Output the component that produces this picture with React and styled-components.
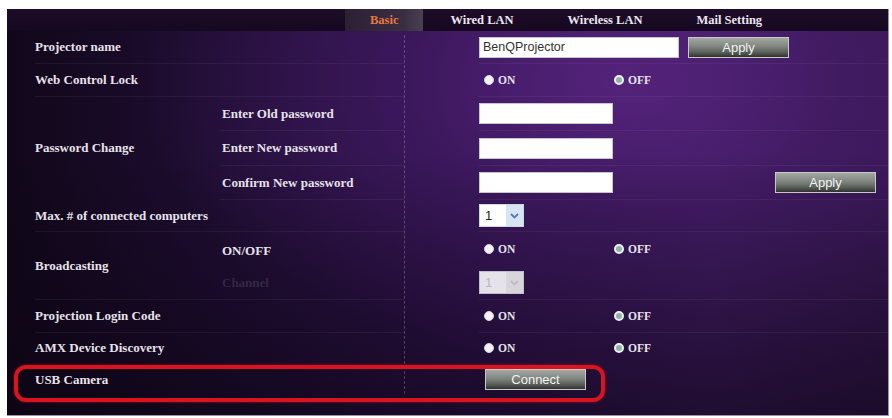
import React from 'react';
import styled, { createGlobalStyle } from 'styled-components';

const GlobalStyle = createGlobalStyle`
  html, body {
    margin: 0;
    padding: 0;
    background: #ffffff;
  }
  body {
    font-family: "Liberation Serif", "Times New Roman", serif;
  }
`;

const Page = styled.div`
  width: 892px;
  height: 418px;
  padding: 9px 3px 3px 7px;
  box-sizing: border-box;
`;

const Panel = styled.div`
  position: relative;
  height: 406px;
  display: flex;
  flex-direction: column;
  overflow: hidden;
  background:
    radial-gradient(ellipse 55% 70% at 70% 18%, rgba(88, 36, 128, 0.85) 0%, rgba(72, 28, 108, 0.5) 45%, rgba(40, 14, 60, 0) 100%),
    linear-gradient(90deg, #11071a 0%, #200e34 25%, #341554 55%, #411d64 80%, #371852 100%);
  border-right: 1px solid #9b92a0;
  border-bottom: 1px solid #9b92a0;

  &::after {
    content: '';
    position: absolute;
    inset: 0;
    pointer-events: none;
    background: linear-gradient(180deg, rgba(0, 0, 0, 0) 35%, rgba(10, 3, 16, 0.6) 100%);
  }
`;

const TabBar = styled.div`
  position: relative;
  z-index: 1;
  height: 22px;
  display: flex;
  align-items: stretch;
  padding-left: 338px;
  background: linear-gradient(180deg, #1e0c28 0%, #150820 100%);
`;

const Tab = styled.div`
  display: flex;
  align-items: center;
  padding: 0 ${(p) => (p.$active ? 25 : 27)}px;
  font-size: 12.5px;
  font-weight: bold;
  color: ${(p) => (p.$active ? '#e5793c' : '#ece6f0')};
  background: ${(p) =>
    p.$active ? 'linear-gradient(90deg, #2e2034 0%, #3b2e42 75%, #4a4050 100%)' : 'transparent'};
`;

const Grid = styled.div`
  position: relative;
  z-index: 1;
  display: grid;
  grid-template-columns: 28px 185px 184px 75px 1fr;
  grid-template-rows: 33px 33px 34px 35px 34px 32px 34px 34px 33px 31px 32px;
`;

const Cell = styled.div`
  display: flex;
  align-items: center;
  border-bottom: 1px solid rgba(255, 255, 255, ${(p) => (p.$line ? 0.05 : 0)});
`;

const Label = styled(Cell)`
  grid-column: ${(p) => (p.$wide ? '2 / 4' : '2')};
  grid-row: ${(p) => p.$row};
  font-size: 13px;
  font-weight: bold;
  color: #e6e2ea;
  white-space: nowrap;
`;

const SubLabel = styled(Cell)`
  grid-column: 3;
  grid-row: ${(p) => p.$row};
  font-size: 13px;
  font-weight: bold;
  color: ${(p) => (p.$faint ? 'rgba(255, 255, 255, 0.13)' : '#e6e2ea')};
  align-items: ${(p) => (p.$top ? 'flex-start' : 'center')};
  padding-top: ${(p) => (p.$top ? '11px' : '0')};
  padding-left: 2px;
`;

const Divider = styled.div`
  grid-column: 4;
  grid-row: 1 / 12;
  border-left: 1px dashed rgba(255, 255, 255, 0.22);
  margin: 4px 0 2px;
`;

const Value = styled(Cell)`
  grid-column: 5;
  grid-row: ${(p) => p.$row};
  gap: 9px;
`;

const TextInput = styled.input`
  width: ${(p) => p.$w}px;
  height: 21px;
  box-sizing: border-box;
  border: 1px solid #c9c4cc;
  background: #ffffff;
  padding: 0 3px;
  font-family: "Liberation Sans", Arial, sans-serif;
  font-size: 12.5px;
  color: #333;
  outline: none;
`;

const Button = styled.button`
  width: ${(p) => p.$w || 101}px;
  height: 21px;
  margin-left: ${(p) => p.$ml || 0}px;
  border: 1px solid #c8c8c8;
  background: linear-gradient(180deg, #a3a8a3 0%, #7f857f 45%, #5a5f5a 75%, #2f332f 100%);
  color: #f2f2f2;
  font-family: "Liberation Sans", Arial, sans-serif;
  font-size: 13px;
  padding: 0;
  cursor: pointer;
`;

const RadioGroup = styled.div`
  display: flex;
  padding-left: 5px;
`;

const RadioOption = styled.label`
  width: 130px;
  display: flex;
  align-items: center;
  gap: 4px;
  font-size: 11.5px;
  font-weight: bold;
  color: #e6e2ea;
`;

const Dot = styled.span`
  width: 10px;
  height: 10px;
  border-radius: 50%;
  box-sizing: border-box;
  background: ${(p) => (p.$checked ? '#8fb3a8' : '#f4f2f6')};
  border: ${(p) => (p.$checked ? '2.5px solid #eef0ee' : '1px solid #d8d4dc')};
`;

const Select = styled.div`
  width: 45px;
  height: 23px;
  box-sizing: border-box;
  display: flex;
  border: 1px solid #cfd6e0;
  background: #ffffff;
  font-family: "Liberation Sans", Arial, sans-serif;
  font-size: 13px;
  opacity: ${(p) => (p.$disabled ? 0.88 : 1)};
`;

const SelectText = styled.span`
  flex: 1;
  display: flex;
  align-items: center;
  padding-left: 5px;
  color: ${(p) => (p.$disabled ? '#cfcfcf' : '#222')};
`;

const SelectArrow = styled.span`
  width: 17px;
  display: flex;
  align-items: center;
  justify-content: center;
  background: ${(p) => (p.$disabled ? '#f0f0f0' : '#d7e4f4')};
`;

const Highlight = styled.div`
  position: absolute;
  z-index: 2;
  left: 7px;
  top: 356px;
  width: 591px;
  height: 37px;
  box-sizing: border-box;
  border: 4px solid #d9141f;
  border-radius: 12px;
  box-shadow: 0 0 3px rgba(230, 20, 30, 0.6);
  pointer-events: none;
`;

const Radio = ({ on }) => (
  <RadioGroup>
    <RadioOption>
      <Dot $checked={on} />
      ON
    </RadioOption>
    <RadioOption>
      <Dot $checked={!on} />
      OFF
    </RadioOption>
  </RadioGroup>
);

const Dropdown = ({ disabled }) => (
  <Select $disabled={disabled}>
    <SelectText $disabled={disabled}>1</SelectText>
    <SelectArrow $disabled={disabled}>
      <svg width="9" height="6" viewBox="0 0 9 6">
        <polyline
          points="1,1 4.5,4.5 8,1"
          fill="none"
          stroke={disabled ? '#d4d4d4' : '#5b7aa8'}
          strokeWidth="1.8"
        />
      </svg>
    </SelectArrow>
  </Select>
);

const tabs = ['Basic', 'Wired LAN', 'Wireless LAN', 'Mail Setting'];

export default function App() {
  return (
    <Page>
      <GlobalStyle />
      <Panel>
        <TabBar>
          {tabs.map((t, i) => (
            <Tab key={t} $active={i === 0}>
              {t}
            </Tab>
          ))}
        </TabBar>

        <Grid>
          <Divider />

          <Label $wide $row={1} $line>Projector name</Label>
          <Value $row={1} $line>
            <TextInput $w={200} defaultValue="BenQProjector" />
            <Button>Apply</Button>
          </Value>

          <Label $wide $row={2} $line>Web Control Lock</Label>
          <Value $row={2} $line>
            <Radio on={false} />
          </Value>

          <Label $row="3 / 6">Password Change</Label>
          <SubLabel $row={3} $line>Enter Old password</SubLabel>
          <Value $row={3} $line>
            <TextInput $w={134} type="password" />
          </Value>
          <SubLabel $row={4} $line>Enter New password</SubLabel>
          <Value $row={4} $line>
            <TextInput $w={134} type="password" />
          </Value>
          <SubLabel $row={5} $line>Confirm New password</SubLabel>
          <Value $row={5} $line>
            <TextInput $w={134} type="password" />
            <Button $ml={153}>Apply</Button>
          </Value>

          <Label $wide $row={6} $line>Max. # of connected computers</Label>
          <Value $row={6} $line>
            <Dropdown />
          </Value>

          <Label $row="7 / 9" $line>Broadcasting</Label>
          <SubLabel $row={7} $top>ON/OFF</SubLabel>
          <Value $row={7}>
            <Radio on={false} />
          </Value>
          <SubLabel $row={8} $faint $line>Channel</SubLabel>
          <Value $row={8} $line>
            <Dropdown disabled />
          </Value>

          <Label $wide $row={9} $line>Projection Login Code</Label>
          <Value $row={9} $line>
            <Radio on={false} />
          </Value>

          <Label $wide $row={10}>AMX Device Discovery</Label>
          <Value $row={10}>
            <Radio on={false} />
          </Value>

          <Label $wide $row={11}>USB Camera</Label>
          <Value $row={11}>
            <Button $ml={6}>Connect</Button>
          </Value>
        </Grid>

        <Highlight />
      </Panel>
    </Page>
  );
}
